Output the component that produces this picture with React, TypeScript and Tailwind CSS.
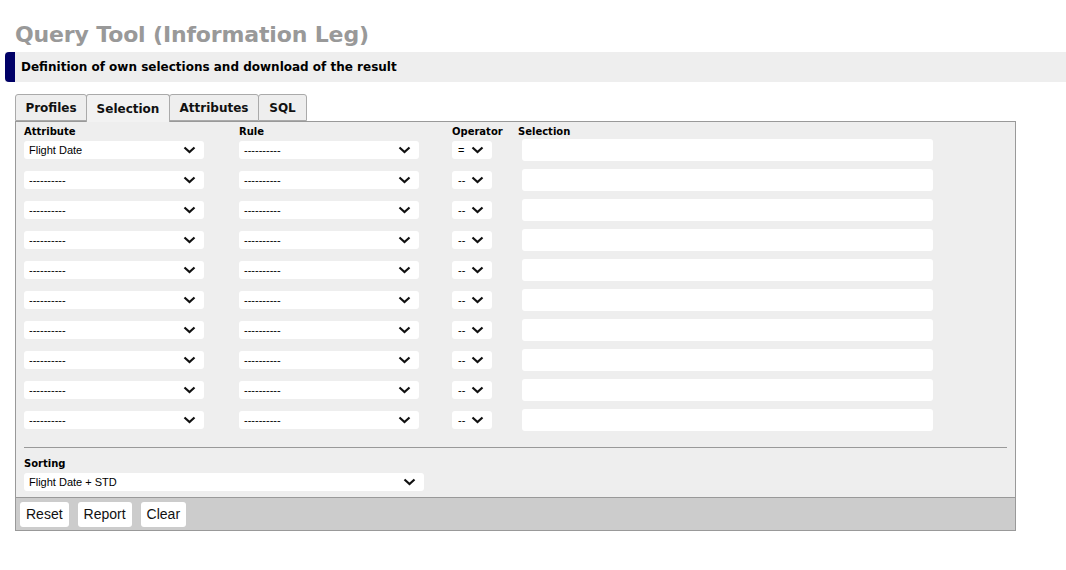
import React from 'react';

const Chevron: React.FC = () => (
  <svg width="13" height="8" viewBox="0 0 13 8" className="shrink-0">
    <polyline points="1.5,1.5 6.5,6 11.5,1.5" fill="none" stroke="#111" strokeWidth="2.2" />
  </svg>
);

interface FakeSelectProps {
  value: string;
  width: string;
}

// looks like a chrome select without border
const FakeSelect: React.FC<FakeSelectProps> = ({ value, width }) => (
  <div
    className={`${width} h-[18px] bg-white rounded-[3px] flex items-center justify-between pl-[5px] pr-[8px] text-[11px] text-black`}
    style={{ fontFamily: '"Liberation Sans", Arial, sans-serif' }}
  >
    <span className="leading-none">{value}</span>
    <Chevron />
  </div>
);

const OpSelect: React.FC<{ value: string }> = ({ value }) => (
  <div
    className="w-[40px] h-[18px] bg-white rounded-[3px] flex items-center justify-between pl-[6px] pr-[8px] text-[11px] text-black"
    style={{ fontFamily: '"Liberation Sans", Arial, sans-serif' }}
  >
    <span className="leading-none">{value}</span>
    <Chevron />
  </div>
);

const dashes = '----------';

const rows = [
  { attr: 'Flight Date', rule: dashes, op: '=' },
  ...Array.from({ length: 9 }, () => ({ attr: dashes, rule: dashes, op: '--' })),
];

const tabs = [
  { name: 'Profiles', w: 'w-[72px]' },
  { name: 'Selection', w: 'w-[84px]' },
  { name: 'Attributes', w: 'w-[90px]' },
  { name: 'SQL', w: 'w-[49px]' },
];

export default function App() {
  return (
    <div className="w-full h-[570px] bg-white font-['DejaVu_Sans',Verdana,sans-serif] overflow-hidden">
      <h1 className="pl-[15px] pt-[21px] text-[22px] leading-[28px] font-bold tracking-[-0.15px] text-[#999999]">
        Query Tool (Information Leg)
      </h1>

      <div className="ml-[5px] mt-[3px] h-[30px] flex bg-[#eeeeee]">
        <div className="w-[10px] bg-[#000066] rounded-l-[4px]" />
        <div className="pl-[6px] flex items-center text-[12px] font-bold text-black">
          Definition of own selections and download of the result
        </div>
      </div>

      <div className="ml-[15px] mt-[12px] flex h-[27px]">
        {tabs.map((t) => (
          <div
            key={t.name}
            className={`${t.w} flex items-center justify-center text-[12px] font-bold text-[#111] border border-[#aaaaaa] -ml-px first:ml-0 rounded-t-[3px] ${
              t.name === 'Selection' ? 'bg-[#f2f2f2] border-b-0 relative z-10 h-[28px]' : 'bg-[#eeeeee]'
            }`}
          >
            {t.name}
          </div>
        ))}
      </div>

      <div className="ml-[15px] w-[1001px] border border-[#999999] bg-[#eeeeee]">
        <div className="px-[8px] pt-[4px]">
          <div className="flex h-[10px] items-center text-[10px] font-bold text-black">
            <div className="w-[180px]">Attribute</div>
            <div className="w-[180px] ml-[35px]">Rule</div>
            <div className="w-[40px] ml-[33px]">Operator</div>
            <div className="ml-[26px]">Selection</div>
          </div>

          <div className="-mt-px">
            {rows.map((r, i) => (
              <div key={i} className="flex h-[30px] items-center">
                <FakeSelect value={r.attr} width="w-[180px]" />
                <div className="ml-[35px]">
                  <FakeSelect value={r.rule} width="w-[180px]" />
                </div>
                <div className="ml-[33px]">
                  <OpSelect value={r.op} />
                </div>
                <div className="ml-[30px] w-[411px] h-[22px] bg-white rounded-[3px]" />
              </div>
            ))}
          </div>

          <div className="mt-[12px] border-t border-[#999999]" />

          <div className="pt-[10px] pb-[6px]">
            <div className="text-[10px] font-bold text-black leading-[12px]">Sorting</div>
            <div className="mt-[3px]">
              <FakeSelect value="Flight Date + STD" width="w-[400px]" />
            </div>
          </div>
        </div>

        <div
          className="h-[33px] bg-[#cccccc] border-t border-[#999999] flex items-center gap-[9px] pl-[4px]"
          style={{ fontFamily: '"Liberation Sans", Arial, sans-serif' }}
        >
          {['Reset', 'Report', 'Clear'].map((b) => (
            <div key={b} className="h-[25px] px-[6px] bg-white rounded-[3px] flex items-center text-[14px] text-[#111]">
              {b}
            </div>
          ))}
        </div>
      </div>
    </div>
  );
}
